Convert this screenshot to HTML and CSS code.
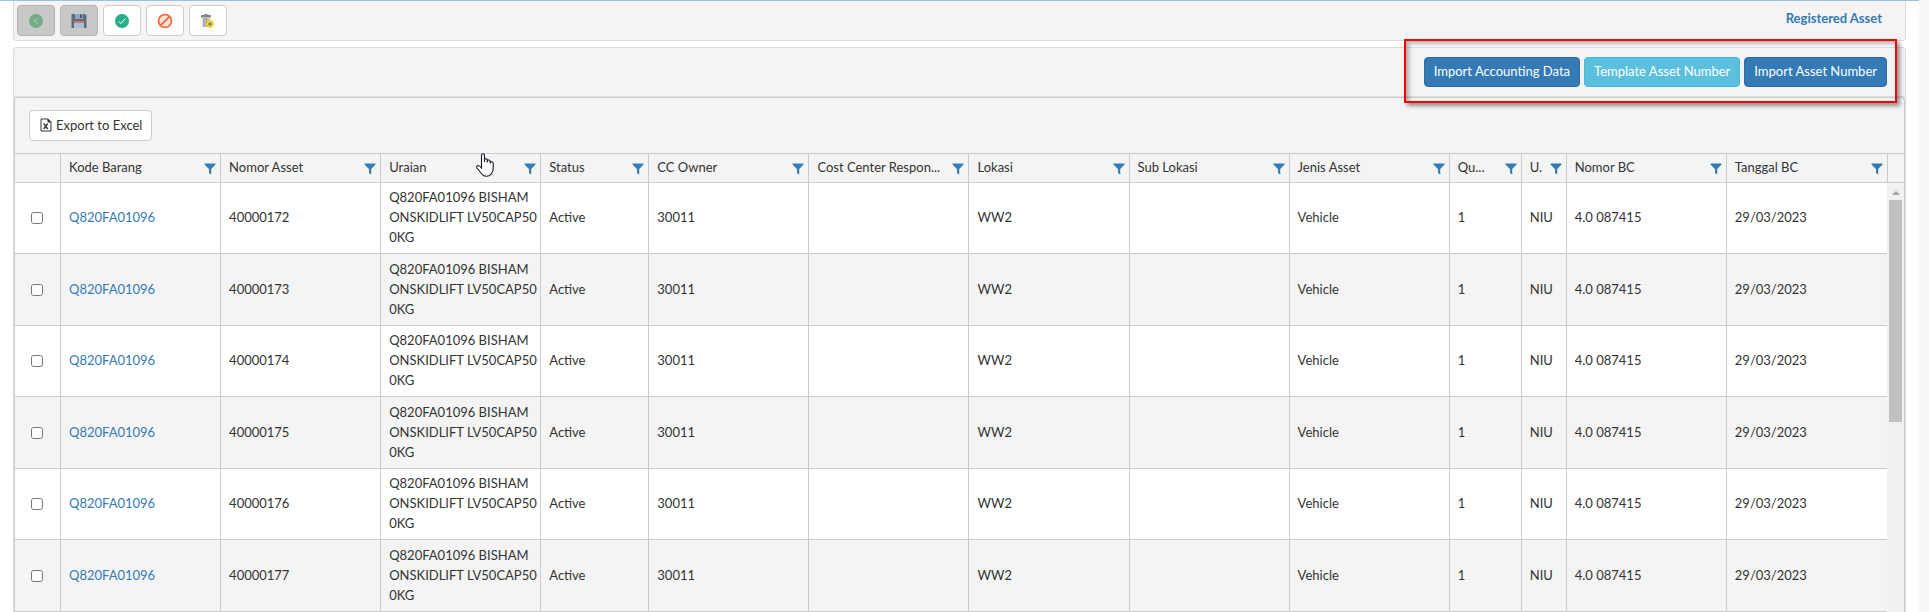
FILE: index.html
```html
<!DOCTYPE html>
<html lang="id">
<head>
    <meta charset="UTF-8">
    <meta name="viewport" content="width=device-width, initial-scale=1.0">
    <title>Registered Asset</title>
    <link rel="stylesheet" href="styles.css">
</head>
<body>
    <!-- shared icons -->
    <svg class="sprite" aria-hidden="true">
        <symbol id="filter" viewBox="0 0 12 12">
            <path d="M0.5 0.5H11.5V1.5L7.2 6V11.5L5 10V6L0.5 1.5Z" fill="#337ab7"/>
        </symbol>
    </svg>

    <div class="page">
        <div class="toolbar">
            <div class="tools">
                <button type="button" class="tool" aria-label="Back" disabled>
                    <svg width="16" height="16" viewBox="0 0 16 16">
                        <circle cx="8" cy="8" r="7" fill="#76ab88"/>
                        <path d="M9.3 5L6.3 8L9.3 11" fill="none" stroke="#b3cdb9" stroke-width="1"/>
                    </svg>
                </button>
                <button type="button" class="tool" aria-label="Save" disabled>
                    <svg width="16" height="16" viewBox="0 0 16 16">
                        <path d="M0.5 1H14L15.5 2.5V15H0.5Z" fill="#5c6b7d"/>
                        <path d="M4 1H12V6H4Z" fill="#8fa5b8"/>
                        <path d="M9 1.5H11V5H9Z" fill="#4c5968"/>
                        <path d="M3 8H13V10H3Z" fill="#d1785f"/>
                        <path d="M3 10H13V15H3Z" fill="#a9bfd4"/>
                    </svg>
                </button>
                <button type="button" class="tool" aria-label="Approve">
                    <svg width="16" height="16" viewBox="0 0 16 16">
                        <circle cx="8" cy="8" r="7" fill="#25ae88"/>
                        <path d="M4.7 8.3L7 10.6L11.5 5.4" fill="none" stroke="#fff" stroke-width="1"/>
                    </svg>
                </button>
                <button type="button" class="tool" aria-label="Cancel">
                    <svg width="16" height="16" viewBox="0 0 16 16">
                        <circle cx="8" cy="8" r="6.5" fill="#fbe6d4" stroke="#f9603a" stroke-width="1.6"/>
                        <path d="M3.6 12.4L12.4 3.6" stroke="#f9603a" stroke-width="1.8"/>
                    </svg>
                </button>
                <button type="button" class="tool" aria-label="Delete">
                    <svg width="16" height="16" viewBox="0 0 16 16">
                        <path d="M1 2H11V4.5H1Z" fill="#868686"/>
                        <path d="M4 1H8V2H4Z" fill="#9a9a9a"/>
                        <path d="M2.5 4.5H10V14H2.5Z" fill="#c4c4c4"/>
                        <path d="M4 5V14M6.5 5V14" stroke="#909090" stroke-width="1"/>
                        <circle cx="10" cy="11" r="3.8" fill="#f6d321"/>
                        <circle cx="10" cy="11" r="1.6" fill="#3f7fc4"/>
                    </svg>
                </button>
            </div>
            <a href="#" class="page-title">Registered Asset</a>
        </div>

        <div class="panel">
            <div class="panel-heading">
                <div class="actions">
                    <button type="button" class="btn btn-primary">Import Accounting Data</button>
                    <button type="button" class="btn btn-info">Template Asset Number</button>
                    <button type="button" class="btn btn-primary">Import Asset Number</button>
                    <div class="highlight"></div>
                </div>
            </div>

            <div class="grid">
                <div class="grid-toolbar">
                    <button type="button" class="btn btn-default">
                        <svg width="12" height="14" viewBox="0 0 12 14">
                            <path d="M1 1H8L11 4V13H1Z" fill="#fff" stroke="#333" stroke-width="1"/>
                            <path d="M8 1V4H11Z" fill="#333" stroke="#333" stroke-width="1"/>
                            <path d="M3.7 5.5L7.7 11M7.7 5.5L3.7 11" stroke="#333" stroke-width="1.3"/>
                        </svg>
                        Export to Excel
                    </button>
                </div>

                <div class="grid-content">
                    <table>
                        <colgroup>
                            <col class="col-check">
                            <col class="col-wide" span="3">
                            <col class="col-status">
                            <col class="col-wide" span="5">
                            <col class="col-qty">
                            <col class="col-unit">
                            <col class="col-wide" span="2">
                        </colgroup>
                        <thead>
                            <tr>
                                <th></th>
                                <th><div class="head"><span>Kode Barang</span><button type="button" aria-label="Filter Kode Barang"><svg><use href="#filter"/></svg></button></div></th>
                                <th><div class="head"><span>Nomor Asset</span><button type="button" aria-label="Filter Nomor Asset"><svg><use href="#filter"/></svg></button></div></th>
                                <th class="hovered">
                                    <div class="head"><span>Uraian</span><button type="button" aria-label="Filter Uraian"><svg><use href="#filter"/></svg></button></div>
                                    <svg class="pointer" viewBox="0 0 18 24">
                                        <path d="M5.5 14V2.5Q5.5 0.7 7 0.7T8.5 2.5V9V6.8Q8.7 5.6 10 5.8T11.3 7V9.5V8Q11.5 6.8 12.8 7T14.2 8.3V10.5V9.5Q14.5 8.3 15.8 8.7T17.2 10V15Q17.2 18 15.5 20.5Q13.8 23.3 10.5 23.3Q7.5 23.3 5.8 21L1 15Q0.2 13.2 1.8 12.6Q3.2 12.3 5.5 15Z" fill="#fff" stroke="#15152a" stroke-width="1.1"/>
                                    </svg>
                                </th>
                                <th><div class="head"><span>Status</span><button type="button" aria-label="Filter Status"><svg><use href="#filter"/></svg></button></div></th>
                                <th><div class="head"><span>CC Owner</span><button type="button" aria-label="Filter CC Owner"><svg><use href="#filter"/></svg></button></div></th>
                                <th><div class="head"><span>Cost Center Respon...</span><button type="button" aria-label="Filter Cost Center"><svg><use href="#filter"/></svg></button></div></th>
                                <th><div class="head"><span>Lokasi</span><button type="button" aria-label="Filter Lokasi"><svg><use href="#filter"/></svg></button></div></th>
                                <th><div class="head"><span>Sub Lokasi</span><button type="button" aria-label="Filter Sub Lokasi"><svg><use href="#filter"/></svg></button></div></th>
                                <th><div class="head"><span>Jenis Asset</span><button type="button" aria-label="Filter Jenis Asset"><svg><use href="#filter"/></svg></button></div></th>
                                <th><div class="head"><span>Qu...</span><button type="button" aria-label="Filter Quantity"><svg><use href="#filter"/></svg></button></div></th>
                                <th><div class="head"><span>U.</span><button type="button" aria-label="Filter Unit"><svg><use href="#filter"/></svg></button></div></th>
                                <th><div class="head"><span>Nomor BC</span><button type="button" aria-label="Filter Nomor BC"><svg><use href="#filter"/></svg></button></div></th>
                                <th><div class="head"><span>Tanggal BC</span><button type="button" aria-label="Filter Tanggal BC"><svg><use href="#filter"/></svg></button></div></th>
                            </tr>
                        </thead>
                        <tbody>
                            <tr>
                                <td class="check"><input type="checkbox" aria-label="Select 40000172"></td>
                                <td><a href="#">Q820FA01096</a></td>
                                <td>40000172</td>
                                <td>Q820FA01096 BISHAMONSKIDLIFT LV50CAP500KG</td>
                                <td>Active</td>
                                <td>30011</td>
                                <td></td>
                                <td>WW2</td>
                                <td></td>
                                <td>Vehicle</td>
                                <td>1</td>
                                <td>NIU</td>
                                <td>4.0 087415</td>
                                <td>29/03/2023</td>
                            </tr>
                            <tr>
                                <td class="check"><input type="checkbox" aria-label="Select 40000173"></td>
                                <td><a href="#">Q820FA01096</a></td>
                                <td>40000173</td>
                                <td>Q820FA01096 BISHAMONSKIDLIFT LV50CAP500KG</td>
                                <td>Active</td>
                                <td>30011</td>
                                <td></td>
                                <td>WW2</td>
                                <td></td>
                                <td>Vehicle</td>
                                <td>1</td>
                                <td>NIU</td>
                                <td>4.0 087415</td>
                                <td>29/03/2023</td>
                            </tr>
                            <tr>
                                <td class="check"><input type="checkbox" aria-label="Select 40000174"></td>
                                <td><a href="#">Q820FA01096</a></td>
                                <td>40000174</td>
                                <td>Q820FA01096 BISHAMONSKIDLIFT LV50CAP500KG</td>
                                <td>Active</td>
                                <td>30011</td>
                                <td></td>
                                <td>WW2</td>
                                <td></td>
                                <td>Vehicle</td>
                                <td>1</td>
                                <td>NIU</td>
                                <td>4.0 087415</td>
                                <td>29/03/2023</td>
                            </tr>
                            <tr>
                                <td class="check"><input type="checkbox" aria-label="Select 40000175"></td>
                                <td><a href="#">Q820FA01096</a></td>
                                <td>40000175</td>
                                <td>Q820FA01096 BISHAMONSKIDLIFT LV50CAP500KG</td>
                                <td>Active</td>
                                <td>30011</td>
                                <td></td>
                                <td>WW2</td>
                                <td></td>
                                <td>Vehicle</td>
                                <td>1</td>
                                <td>NIU</td>
                                <td>4.0 087415</td>
                                <td>29/03/2023</td>
                            </tr>
                            <tr>
                                <td class="check"><input type="checkbox" aria-label="Select 40000176"></td>
                                <td><a href="#">Q820FA01096</a></td>
                                <td>40000176</td>
                                <td>Q820FA01096 BISHAMONSKIDLIFT LV50CAP500KG</td>
                                <td>Active</td>
                                <td>30011</td>
                                <td></td>
                                <td>WW2</td>
                                <td></td>
                                <td>Vehicle</td>
                                <td>1</td>
                                <td>NIU</td>
                                <td>4.0 087415</td>
                                <td>29/03/2023</td>
                            </tr>
                            <tr>
                                <td class="check"><input type="checkbox" aria-label="Select 40000177"></td>
                                <td><a href="#">Q820FA01096</a></td>
                                <td>40000177</td>
                                <td>Q820FA01096 BISHAMONSKIDLIFT LV50CAP500KG</td>
                                <td>Active</td>
                                <td>30011</td>
                                <td></td>
                                <td>WW2</td>
                                <td></td>
                                <td>Vehicle</td>
                                <td>1</td>
                                <td>NIU</td>
                                <td>4.0 087415</td>
                                <td>29/03/2023</td>
                            </tr>
                        </tbody>
                    </table>
                    <div class="scrollbar">
                        <div class="scroll-head"></div>
                        <div class="scroll-arrow"></div>
                        <div class="scroll-thumb"></div>
                    </div>
                </div>
            </div>
        </div>
    </div>
</body>
</html>
```
FILE: styles.css
```css
:root {
    --primary-color: #337ab7;
    --info-color: #5bc0de;
    --text-color: #333;
    --bar-color: #f4f4f4;
    --line-color: #ccc;
}

* {
    box-sizing: border-box;
}

body {
    font-family: Lato, sans-serif;
    font-size: 13px;
    line-height: 20px;
    color: var(--text-color);
    background-color: #f8f8f8;
    margin: 0;
    height: 100vh;
    overflow: hidden;
}

a {
    color: var(--primary-color);
    text-decoration: none;
}

button {
    font: inherit;
    cursor: pointer;
}

.sprite {
    display: none;
}

.page {
    min-height: 100vh;
    margin-right: 10px;
    padding: 0 13px;
    background: #fff;
    border-top: 1px solid #9bc1e0;
}

.toolbar {
    display: flex;
    justify-content: space-between;
    align-items: flex-start;
    height: 40px;
    padding: 4px 23px 0 3px;
    background: var(--bar-color);
    border: 1px solid #ddd;
    border-top: none;
    border-radius: 0 0 4px 4px;
}

.tools {
    display: flex;
    gap: 5px;
}

.tool {
    display: flex;
    align-items: center;
    justify-content: center;
    width: 38px;
    height: 31px;
    padding: 0;
    background: #fff;
    border: 1px solid var(--line-color);
    border-radius: 4px;
}

.tool:disabled {
    background: #c8c8c8;
    border-color: #b4b4b4;
}

.page-title {
    padding-top: 3px;
    font-weight: bold;
}

.panel {
    margin-top: 6px;
    background: var(--bar-color);
    border: 1px solid #ddd;
    border-bottom: none;
    border-radius: 4px 4px 0 0;
}

.panel-heading {
    display: flex;
    justify-content: flex-end;
    padding: 9px 18px 9px 0;
    border-bottom: 1px solid #ddd;
}

.actions {
    position: relative;
    display: flex;
    gap: 4px;
}

.btn {
    height: 30px;
    padding: 0 9px 2px;
    color: #fff;
    border: 1px solid transparent;
    border-radius: 4px;
}

.btn-primary {
    background: var(--primary-color);
    border-color: #2e6da4;
}

.btn-info {
    background: var(--info-color);
    border-color: #46b8da;
}

.btn-default {
    display: flex;
    align-items: center;
    gap: 4px;
    height: 31px;
    padding-left: 10px;
    color: var(--text-color);
    background: #fff;
    border-color: var(--line-color);
}

/* red frame around the import buttons */
.highlight {
    position: absolute;
    top: -18px;
    right: -10px;
    bottom: -16px;
    left: -20px;
    border: 2px solid #f00;
    box-shadow: 3px 3px 4px rgba(0,0,0,0.4), inset 3px 3px 4px rgba(0,0,0,0.3);
    pointer-events: none;
}

.grid {
    border: 1px solid var(--line-color);
    border-bottom: none;
    border-radius: 4px 4px 0 0;
}

.grid-toolbar {
    padding: 12px 14px;
    border-bottom: 1px solid var(--line-color);
}

.grid-content {
    display: flex;
}

table {
    flex: 1;
    width: 100%;
    table-layout: fixed;
    border-collapse: separate;
    border-spacing: 0;
}

.col-check {
    width: 46px;
}

.col-wide {
    width: 160px;
}

.col-status {
    width: 108px;
}

.col-qty {
    width: 72px;
}

.col-unit {
    width: 45px;
}

th {
    height: 29px;
    padding: 0 4px 2px 8px;
    font-weight: normal;
    text-align: left;
    border-right: 1px solid var(--line-color);
    border-bottom: 1px solid var(--line-color);
}

.head {
    display: flex;
    align-items: center;
    justify-content: space-between;
}

.head span {
    white-space: nowrap;
}

.head button {
    display: flex;
    padding: 3px 0 0;
    background: none;
    border: none;
}

.head svg {
    width: 12px;
    height: 12px;
}

.hovered {
    position: relative;
}

.pointer {
    position: absolute;
    top: -1px;
    right: 46px;
    width: 18px;
    height: 24px;
}

td {
    height: 71px;
    padding: 0 3px 2px 8px;
    background: #fff;
    border-right: 1px solid var(--line-color);
    border-bottom: 1px solid var(--line-color);
    word-break: break-all;
}

tr:nth-child(even) td {
    height: 72px;
    background: var(--bar-color);
}

th:last-child,
td:last-child {
    border-right: none;
}

.check {
    padding: 0 2px 0 0;
}

.check input {
    display: block;
    width: 12px;
    height: 12px;
    margin: 0 auto;
}

.scrollbar {
    flex: none;
    width: 17px;
    background: #f1f1f1;
}

.scroll-head {
    height: 29px;
    background: var(--bar-color);
    border-left: 1px solid var(--line-color);
    border-bottom: 1px solid var(--line-color);
}

.scroll-arrow {
    width: 0;
    margin: 8px auto 5px;
    border: 4px solid transparent;
    border-top: none;
    border-bottom-color: #a3a3a3;
}

.scroll-thumb {
    width: 13px;
    height: 222px;
    margin: 0 auto;
    background: #c1c1c1;
}
```
